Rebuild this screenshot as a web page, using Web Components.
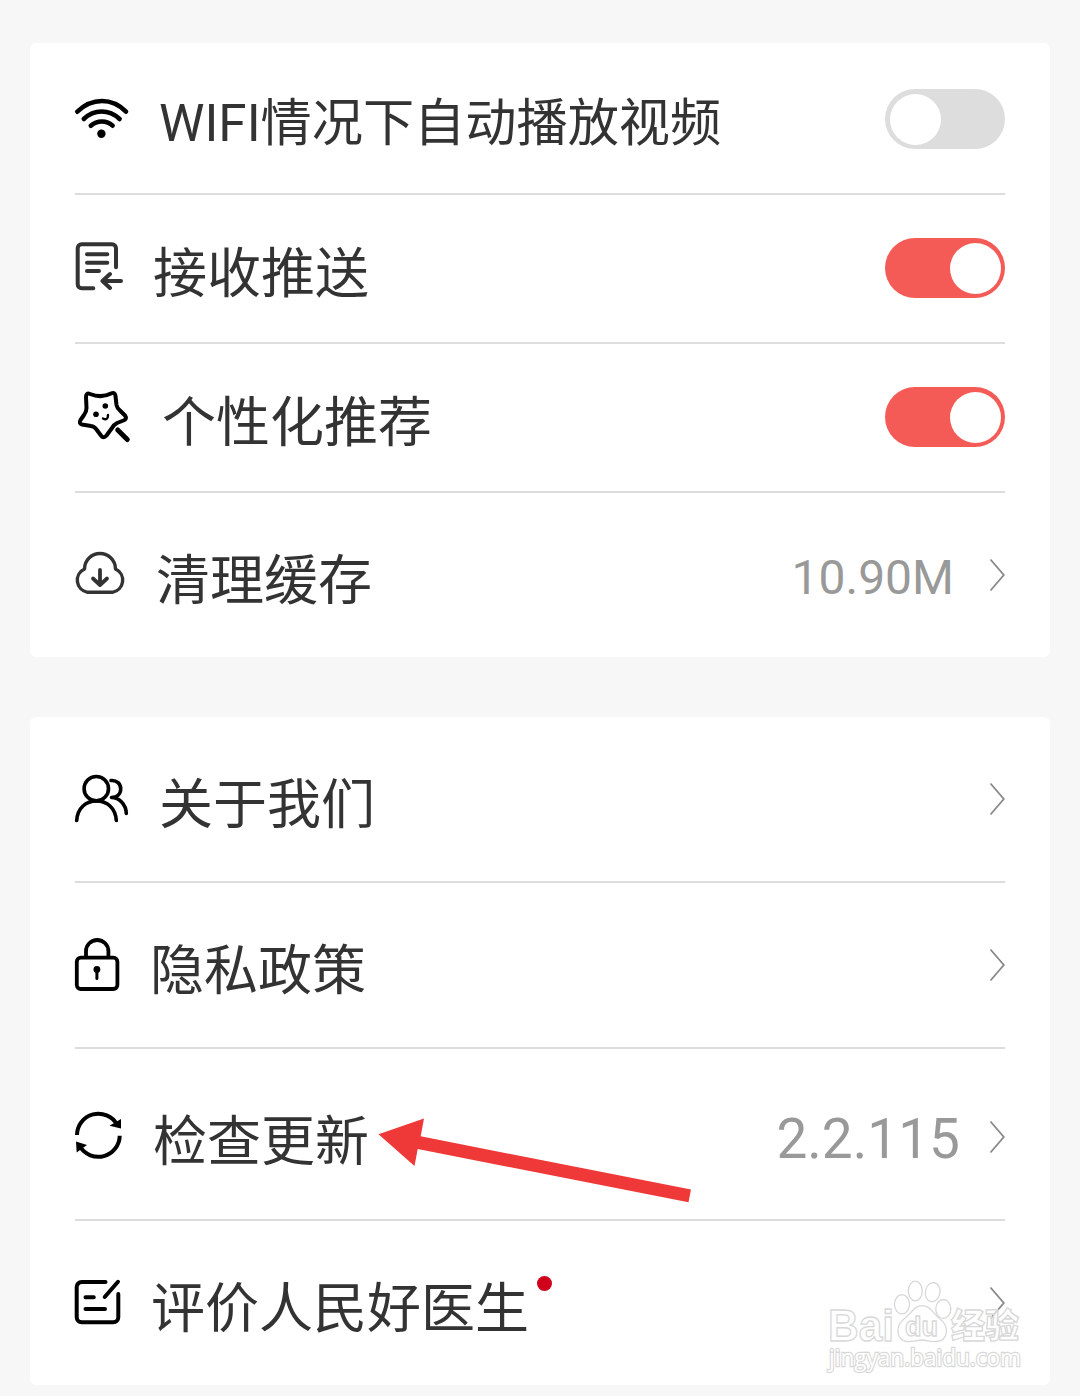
<!DOCTYPE html>
<html lang="zh-CN">
<head>
<meta charset="UTF-8">
<title>设置</title>
<style>
    body {
        margin: 0;
        background: #f7f7f7;
        font-family: Roboto, "Noto Sans CJK SC", sans-serif;
        color: #333;
    }
</style>
</head>
<body>
<settings-page>
    <settings-card>
        <settings-row icon="wifi" style="--height: 150px; --top: 2px; --icon-width: 84px; --size: 51.2px; --label-shift: 9px">WIFI情况下自动播放视频<toggle-switch slot="end"></toggle-switch></settings-row>
        <settings-row icon="push" style="--height: 147px; --bottom: 1px; --icon-width: 78px">接收推送<toggle-switch slot="end" checked></toggle-switch></settings-row>
        <settings-row icon="star" style="--height: 147px; --bottom: 1px; --icon-width: 87px">个性化推荐<toggle-switch slot="end" checked></toggle-switch></settings-row>
        <settings-row icon="cloud" style="--height: 164px; --icon-width: 81px">清理缓存<row-value slot="end" style="--value-size: 48px; --value-gap: 35px">10.90M</row-value></settings-row>
    </settings-card>
    <settings-card>
        <settings-row icon="users" style="--height: 164px; --icon-width: 84px">关于我们<row-value slot="end"></row-value></settings-row>
        <settings-row icon="lock" style="--height: 164px; --icon-width: 75px">隐私政策<row-value slot="end"></row-value></settings-row>
        <settings-row icon="refresh" style="--height: 170px; --icon-width: 78px; --top: 5px">检查更新<row-value slot="end" style="--value-size: 55px; --value-gap: 29px">2.2.115</row-value></settings-row>
        <settings-row icon="review" dot style="--height: 164px; --icon-width: 76px">评价人民好医生<row-value slot="end"></row-value></settings-row>
    </settings-card>
    <pointer-arrow slot="overlay"></pointer-arrow>
    <water-mark slot="overlay"></water-mark>
</settings-page>

<script>
const icons = {
    wifi: `<g stroke="#000" stroke-width="4.6">
        <path d="M2.300 22.700C17 8.500 37 8.500 51 22.700M8.800 30C19 20 34.200 20 44.600 30M15.800 36.700C22 31 32 31 37.600 36.700"/>
        <circle cx="26.400" cy="44.700" r="4.200" fill="#000" stroke="none"/></g>`,
    push: `<g stroke="#333" stroke-width="4">
        <path d="M18.300 50.300H6.700a4 4 0 0 1-4-4V10.300a4 4 0 0 1 4-4H37a4 4 0 0 1 4 4V29.300"/>
        <path d="M12 16.300H32.300M12 24.700H32.300M12 33H24M46 43H27.500M35 36L27.500 43L35 50"/></g>`,
    star: `<g stroke="#000" stroke-width="4">
        <path d="M15 7Q26.500 11.500 36 6.500Q40 4.500 40.500 9L41.500 18Q42 21 45 23.500L50 28.500Q52.500 32 48.500 33.500L42 36Q39 37.500 37 41L31.500 48.500Q28.500 52 26 48.500L21.500 42.500Q19.500 39.500 16 39L7 37.500Q3.500 36.500 5.500 33L9 28Q11.500 25 11.500 21L11 10Q11 5.500 15 7Z"/>
        <circle cx="21" cy="27.300" r="2.800" fill="#000" stroke="none"/>
        <circle cx="30.300" cy="19" r="2.800" fill="#000" stroke="none"/>
        <path d="M28 31.500Q33 34 33 28" stroke-width="2.400"/>
        <path d="M42.700 43L52.300 52.500" stroke-width="5"/></g>`,
    cloud: `<g stroke="#333" stroke-width="3.400">
        <path d="M12.500 47.300H37.500A12.300 12.300 0 0 0 40.500 24A15.500 15.500 0 0 0 9.500 24A12.300 12.300 0 0 0 12.500 47.300Z"/>
        <path d="M25 25V40M18 33.500L25 40L32 33.500" stroke-width="3.800"/></g>`,
    users: `<g stroke="#000" stroke-width="3.600">
        <circle cx="21.300" cy="19.700" r="12.200"/>
        <path d="M1.700 51.500C2.500 39 11 31.900 21.500 31.900S40.500 39 41.300 51.500"/>
        <path d="M36 11.500C42 11 45.700 15 45.700 20S42 28.300 36.500 28.500C44 28.500 51 35 51.300 44.500"/></g>`,
    lock: `<g stroke="#000" stroke-width="3.800">
        <rect x="1.800" y="22.700" width="40.600" height="31.300" rx="4"/>
        <path d="M11 22V16.200a11.200 11.200 0 0 1 22.400 0V22"/>
        <circle cx="21.900" cy="34.500" r="3.400" fill="#000" stroke="none"/>
        <path d="M21.900 35V43.500" stroke-width="3"/></g>`,
    refresh: `<g stroke="#000" stroke-width="4" stroke-linecap="butt">
        <path d="M2 28A21.400 21.400 0 0 1 42 17.500M44.700 28.700A21.400 21.400 0 0 1 5 39.500"/>
        <path d="M46 12V21.500L34.500 18.700ZM1 34.500L12 38L1.700 45.500Z" fill="#000" stroke="none"/></g>`,
    review: `<g stroke="#000" stroke-width="4">
        <path d="M30.500 9H6.700a5 5 0 0 0-5 5V44.300a5 5 0 0 0 5 5H38.300a5 5 0 0 0 5-5V21"/>
        <path d="M43 8.800L29.700 24M10.500 24.300H18.800M10.500 36H30"/></g>`
};

class SettingsPage extends HTMLElement {
    constructor() {
        super();
        this.attachShadow({ mode: 'open' });
        this.shadowRoot.innerHTML = `
            <style>
                :host {
                    display: flex;
                    flex-direction: column;
                    gap: 60px;
                    box-sizing: border-box;
                    position: relative;
                    width: 1080px;
                    height: 1396px;
                    padding: 43px 30px 0;
                }
            </style>
            <slot></slot>
            <slot name="overlay"></slot>
        `;
    }
}

class SettingsCard extends HTMLElement {
    constructor() {
        super();
        this.attachShadow({ mode: 'open' });
        this.shadowRoot.innerHTML = `
            <style>
                :host {
                    display: block;
                    padding: 0 45px;
                    background: #fff;
                    border-radius: 6px;
                }
                ::slotted(:not(:last-child)) {
                    border-bottom: 2px solid #ddd;
                }
            </style>
            <slot></slot>
        `;
    }
}

class SettingsRow extends HTMLElement {
    constructor() {
        super();
        this.attachShadow({ mode: 'open' });
    }

    connectedCallback() {
        this.shadowRoot.innerHTML = `
            <style>
                :host {
                    display: flex;
                    align-items: center;
                    box-sizing: content-box;
                    height: calc(var(--height) - var(--top, 0px) - var(--bottom, 0px));
                    padding-top: var(--top, 0px);
                    padding-bottom: var(--bottom, 0px);
                }
                .icon {
                    flex: none;
                    width: var(--icon-width);
                    height: 60px;
                }
                svg {
                    display: block;
                    overflow: visible;
                }
                .label {
                    flex: 1;
                    display: flex;
                    padding-top: var(--label-shift, 13px);
                    font-size: var(--size, 54px);
                    line-height: 80px;
                    white-space: nowrap;
                }
                .dot {
                    width: 15px;
                    height: 15px;
                    margin: 6px 0 0 8px;
                    border-radius: 50%;
                    background: #d0021b;
                }
            </style>
            <div class="icon">
                <svg width="56" height="60" viewBox="0 0 56 60" fill="none" stroke-linecap="round" stroke-linejoin="round">${icons[this.getAttribute('icon')]}</svg>
            </div>
            <div class="label"><span><slot></slot></span>${this.hasAttribute('dot') ? '<i class="dot"></i>' : ''}</div>
            <slot name="end"></slot>
        `;
    }
}

class ToggleSwitch extends HTMLElement {
    constructor() {
        super();
        this.attachShadow({ mode: 'open' });
        this.shadowRoot.innerHTML = `
            <style>
                :host {
                    display: flex;
                    align-items: center;
                    box-sizing: border-box;
                    width: 120px;
                    height: 60px;
                    padding: 0 4.5px;
                    border-radius: 30px;
                    background: #ddd;
                }
                :host([checked]) {
                    justify-content: flex-end;
                    background: #f45b56;
                }
                span {
                    width: 51px;
                    height: 51px;
                    border-radius: 50%;
                    background: #fff;
                }
            </style>
            <span></span>
        `;
    }
}

class RowValue extends HTMLElement {
    constructor() {
        super();
        this.attachShadow({ mode: 'open' });
        this.shadowRoot.innerHTML = `
            <style>
                :host {
                    display: flex;
                    align-items: center;
                    gap: var(--value-gap, 0);
                    color: #999;
                    font-size: var(--value-size, 48px);
                    line-height: 60px;
                }
                span {
                    padding-top: 5px;
                }
            </style>
            <span><slot></slot></span>
            <svg width="16" height="34" viewBox="0 0 16 34" fill="none" stroke="#888" stroke-width="1.8"><path d="M1.500 1.500L14.800 17L1.500 32.500"/></svg>
        `;
    }
}

class PointerArrow extends HTMLElement {
    constructor() {
        super();
        this.attachShadow({ mode: 'open' });
        this.shadowRoot.innerHTML = `
            <style>
                :host {
                    position: absolute;
                    left: 378px;
                    top: 1118px;
                }
                svg { display: block; }
            </style>
            <svg width="314" height="86" viewBox="378 1118 314 86"><path fill="#ef3838" d="M378.500 1134.300L424 1118.500L420.700 1136.300L691 1189.500L688.500 1202.300L417.700 1149L414.500 1166Z"/></svg>
        `;
    }
}

class WaterMark extends HTMLElement {
    constructor() {
        super();
        this.attachShadow({ mode: 'open' });
        this.shadowRoot.innerHTML = `
            <style>
                :host {
                    position: absolute;
                    left: 820px;
                    top: 1275px;
                }
                svg {
                    display: block;
                    overflow: visible;
                }
                .url {
                    paint-order: stroke;
                    stroke-width: 2.4px;
                    fill-opacity: 1;
                }
            </style>
            <svg width="210" height="105" viewBox="820 1275 210 105" fill="#fff" fill-opacity=".6" stroke="#d8d8d8" stroke-width="1.300">
                <ellipse cx="915.300" cy="1291" rx="7" ry="9.800"/>
                <ellipse cx="932.700" cy="1292.200" rx="7.300" ry="9.600" transform="rotate(10 932.700 1292.200)"/>
                <ellipse cx="902" cy="1304.300" rx="7.500" ry="9.600"/>
                <ellipse cx="943.300" cy="1309" rx="7.500" ry="9.500"/>
                <path d="M922 1305.700C931 1305.700 933 1314 940 1319C950 1327 948 1341 936 1341.500C930 1342 927 1340 922 1340C917 1340 912 1342 907 1341.500C896 1340 895 1326 904 1319C911 1314 914 1305.700 922 1305.700Z"/>
                <text x="828" y="1340.500" font-family="Liberation Sans" font-weight="700" font-size="45" textLength="66" lengthAdjust="spacingAndGlyphs">Bai</text>
                <text x="905" y="1336" font-family="Liberation Sans" font-weight="700" font-size="27" textLength="33" lengthAdjust="spacingAndGlyphs">du</text>
                <text x="951" y="1338" font-family="Noto Sans CJK SC" font-weight="900" font-size="34" textLength="68">经验</text>
                <text class="url" x="829" y="1366" font-family="Open Sans" font-size="23" textLength="192" lengthAdjust="spacingAndGlyphs">jingyan.baidu.com</text>
            </svg>
        `;
    }
}

customElements.define('settings-page', SettingsPage);
customElements.define('settings-card', SettingsCard);
customElements.define('settings-row', SettingsRow);
customElements.define('toggle-switch', ToggleSwitch);
customElements.define('row-value', RowValue);
customElements.define('pointer-arrow', PointerArrow);
customElements.define('water-mark', WaterMark);
</script>
</body>
</html>
